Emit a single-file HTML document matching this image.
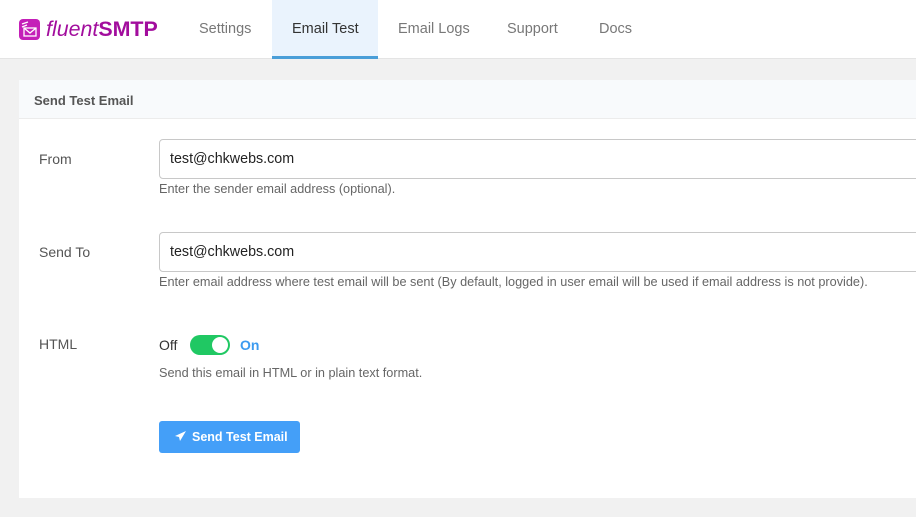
<!DOCTYPE html>
<html><head><style>
*{box-sizing:border-box;margin:0;padding:0}
body{width:916px;height:517px;overflow:hidden;background:#f1f1f1;font-family:"Liberation Sans",sans-serif;position:relative}
.top{position:absolute;left:0;top:0;width:916px;height:59px;background:#fff;border-bottom:1px solid #e4e4e4}
.logo{position:absolute;left:19px;top:19px;width:21px;height:21px;background:#c41fb8;border-radius:4px}
.lt{position:absolute;left:46px;top:17px;font-size:21.4px;color:#a20d9d}
.lt i{font-style:italic}
.lt b{font-weight:bold}
.nav{position:absolute;top:21px;font-size:14.5px;color:#787878}
.act{position:absolute;left:272px;top:0;width:106px;height:59px;background:#eaf3fd;border-bottom:3px solid #4a9ed8}
.card{position:absolute;left:19px;top:80px;width:897px;height:418px;background:#fff}
.hd{height:39px;background:#f8fafc;border-bottom:1px solid #ececec;padding:13px 0 0 15px;font-size:13px;font-weight:bold;color:#555}
.lbl{position:absolute;left:39px;font-size:14px;color:#555}
.inp{position:absolute;left:159px;width:770px;height:40px;border:1px solid #c8c8c8;border-radius:4px;padding:11px 10px;font-size:14.3px;color:#222}
.help{position:absolute;left:159px;font-size:12.7px;color:#666}
</style></head><body>
<div class="top">
<div class="logo"><svg width="21" height="21" viewBox="0 0 21 21"><rect x="5" y="9" width="12" height="8" fill="none" stroke="#fff" stroke-width="1.3"/><path d="M5 9l6 5 6-5" fill="none" stroke="#fff" stroke-width="1.3"/><path d="M3 5l6-2M3 8l5-2" stroke="#fff" stroke-width="1.3"/></svg></div>
<div class="lt"><i>fluent</i><b>SMTP</b></div>
<div class="act"></div>
<div class="nav" style="left:199px">Settings</div>
<div class="nav" style="left:292px;color:#333">Email Test</div>
<div class="nav" style="left:398px">Email Logs</div>
<div class="nav" style="left:507px">Support</div>
<div class="nav" style="left:599px">Docs</div>
</div>
<div class="card"><div class="hd">Send Test Email</div></div>
<div class="lbl" style="top:151px">From</div>
<div class="inp" style="top:139px">test@chkwebs.com</div>
<div class="help" style="top:182px">Enter the sender email address (optional).</div>
<div class="lbl" style="top:244px">Send To</div>
<div class="inp" style="top:232px">test@chkwebs.com</div>
<div class="help" style="top:275px">Enter email address where test email will be sent (By default, logged in user email will be used if email address is not provide).</div>
<div class="lbl" style="top:336px">HTML</div>
<div style="position:absolute;left:159px;top:337px;font-size:14px;color:#333">Off</div>
<div style="position:absolute;left:190px;top:335px;width:40px;height:20px;border-radius:10px;background:#20c863"><div style="position:absolute;right:2px;top:2px;width:16px;height:16px;border-radius:50%;background:#fff"></div></div>
<div style="position:absolute;left:240px;top:337px;font-size:14px;color:#3c9bf0;font-weight:bold">On</div>
<div class="help" style="top:366px">Send this email in HTML or in plain text format.</div>
<div style="position:absolute;left:159px;top:421px;width:141px;height:32px;background:#449ff8;border-radius:3px;color:#fff;font-size:12.5px;font-weight:bold;padding:9px 0 0 33px">Send Test Email</div>
<svg style="position:absolute;left:175px;top:431px" width="11" height="11" viewBox="0 0 11 11"><path d="M11 0L0 5l4 1 1 4z" fill="#fff"/></svg>
</body></html>
